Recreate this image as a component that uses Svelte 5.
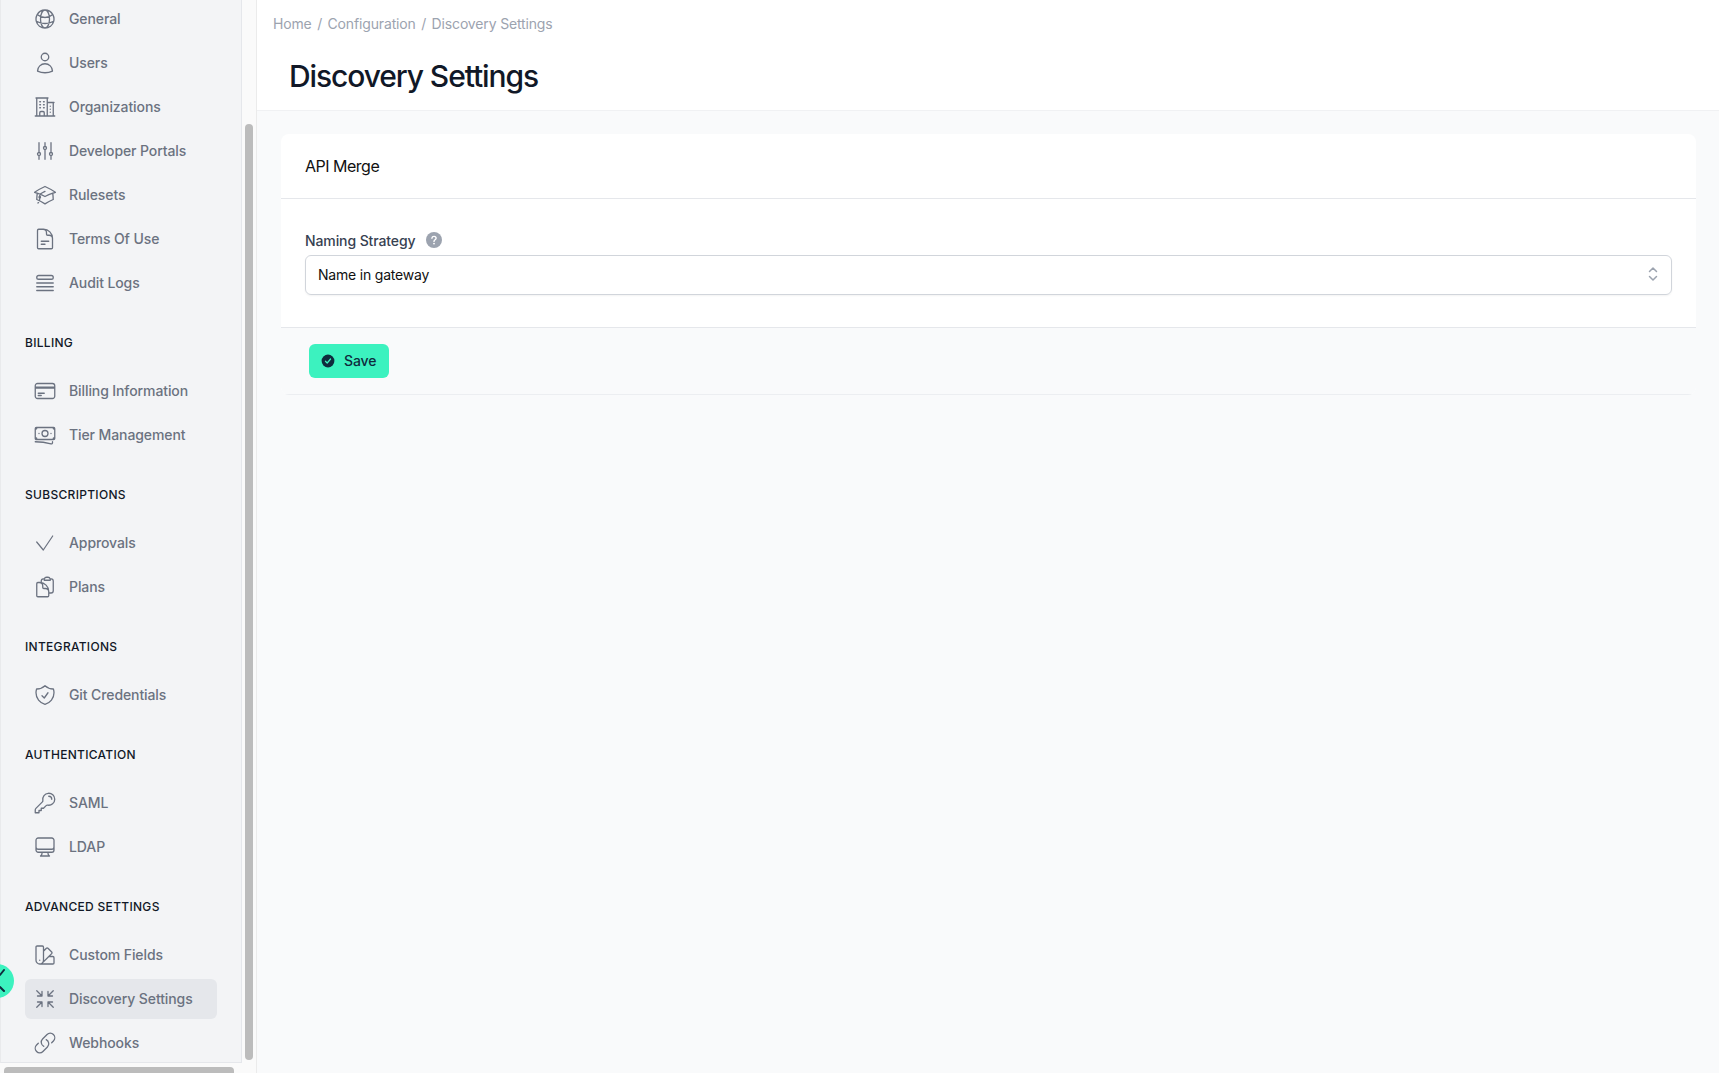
<script lang="ts">
    const icons: Record<string, string> = {
        globe: 'M12 21a9.004 9.004 0 0 0 8.716-6.747M12 21a9.004 9.004 0 0 1-8.716-6.747M12 21c2.485 0 4.5-4.03 4.5-9S14.485 3 12 3m0 18c-2.485 0-4.5-4.03-4.5-9S9.515 3 12 3m0 0a8.997 8.997 0 0 1 7.843 4.582M12 3a8.997 8.997 0 0 0-7.843 4.582m15.686 0A11.953 11.953 0 0 1 12 10.5c-2.998 0-5.74-1.1-7.843-2.918m15.686 0A8.959 8.959 0 0 1 21 12c0 .778-.099 1.533-.284 2.253m0 0A17.919 17.919 0 0 1 12 16.5c-3.162 0-6.133-.815-8.716-2.247m0 0A9.015 9.015 0 0 1 3 12c0-1.605.42-3.113 1.157-4.418',
        user: 'M15.75 6a3.75 3.75 0 1 1-7.5 0 3.75 3.75 0 0 1 7.5 0ZM4.501 20.118a7.5 7.5 0 0 1 14.998 0A17.933 17.933 0 0 1 12 21.75c-2.676 0-5.216-.584-7.499-1.632Z',
        building: 'M2.25 21h19.5m-18-18v18m10.5-18v18m6-13.5V21M6.75 6.75h.75m-.75 3h.75m-.75 3h.75m3-6h.75m-.75 3h.75m-.75 3h.75M6.75 21v-3.375c0-.621.504-1.125 1.125-1.125h2.25c.621 0 1.125.504 1.125 1.125V21M3 3h12m-.75 4.5H21m-3.75 3.75h.008v.008h-.008v-.008Zm0 3h.008v.008h-.008v-.008Zm0 3h.008v.008h-.008v-.008Z',
        sliders: 'M6 13.5V3.75m0 9.75a1.5 1.5 0 0 1 0 3m0-3a1.5 1.5 0 0 0 0 3m0 3.75V16.5m12-3V3.75m0 9.75a1.5 1.5 0 0 1 0 3m0-3a1.5 1.5 0 0 0 0 3m0 3.75V16.5m-6-9V3.75m0 3.75a1.5 1.5 0 0 1 0 3m0-3a1.5 1.5 0 0 0 0 3m0 9.75V10.5',
        cap: 'M4.26 10.147a60.438 60.438 0 0 0-.491 6.347A48.62 48.62 0 0 1 12 20.904a48.62 48.62 0 0 1 8.232-4.41 60.46 60.46 0 0 0-.491-6.347m-15.482 0a50.636 50.636 0 0 0-2.658-.813A59.906 59.906 0 0 1 12 3.493a59.903 59.903 0 0 1 10.399 5.84c-.896.248-1.783.52-2.658.814m-15.482 0A50.717 50.717 0 0 1 12 13.489a50.702 50.702 0 0 1 7.74-3.342M6.75 15a.75.75 0 1 0 0-1.5.75.75 0 0 0 0 1.5Zm0 0v-3.675A55.378 55.378 0 0 1 12 8.443m-7.007 11.55A5.981 5.981 0 0 0 6.75 15.75v-1.5',
        document: 'M19.5 14.25v-2.625a3.375 3.375 0 0 0-3.375-3.375h-1.5A1.125 1.125 0 0 1 13.5 7.125v-1.5a3.375 3.375 0 0 0-3.375-3.375H8.25m0 12h7.5m-7.5 3H12M10.5 2.25H5.625c-.621 0-1.125.504-1.125 1.125v17.25c0 .621.504 1.125 1.125 1.125h12.75c.621 0 1.125-.504 1.125-1.125V11.25a9 9 0 0 0-9-9Z',
        queue: 'M3.75 12h16.5m-16.5 3.75h16.5m-16.5 3.75h16.5M5.625 4.5h12.75a1.875 1.875 0 0 1 0 3.75H5.625a1.875 1.875 0 0 1 0-3.75Z',
        card: 'M2.25 8.25h19.5M2.25 9h19.5m-16.5 5.25h6m-6 2.25h3m-3.75 3h15a2.25 2.25 0 0 0 2.25-2.25V6.75A2.25 2.25 0 0 0 19.5 4.5h-15a2.25 2.25 0 0 0-2.25 2.25v10.5A2.25 2.25 0 0 0 4.5 19.5Z',
        banknotes: 'M2.25 18.75a60.07 60.07 0 0 1 15.797 2.101c.727.198 1.453-.342 1.453-1.096V18.75M3.750 4.5v.75A.75.75 0 0 1 3 6h-.75m0 0v-.375c0-.621.504-1.125 1.125-1.125H20.250M2.250 6v9m18-10.5v.75c0 .414.336.75.75.75h.75m-1.5-1.5h.375c.621 0 1.125.504 1.125 1.125v9.75c0 .621-.504 1.125-1.125 1.125h-.375m1.5-1.5H21a.75.75 0 0 0-.75.75v.75m0 0H3.750m0 0h-.375a1.125 1.125 0 0 1-1.125-1.125V15m1.5 1.5v-.75A.75.75 0 0 0 3 15h-.75M15 10.5a3 3 0 1 1-6 0 3 3 0 0 1 6 0Zm3 0h.008v.008H18V10.5Zm-12 0h.008v.008H6V10.5Z',
        check: 'M3.7 11 10.3 19 19.7 5',
        clipboard: 'M8.25 7.5V6.108c0-1.135.845-2.098 1.976-2.192.373-.03.748-.057 1.123-.08M15.75 18H18a2.25 2.25 0 0 0 2.25-2.25V6.108c0-1.135-.845-2.098-1.976-2.192a48.424 48.424 0 0 0-1.123-.08M15.75 18.75v-1.875a3.375 3.375 0 0 0-3.375-3.375h-1.5a1.125 1.125 0 0 1-1.125-1.125v-1.5A3.375 3.375 0 0 0 6.375 7.5H5.25m11.9-3.664A2.251 2.251 0 0 0 15 2.25h-1.5a2.251 2.251 0 0 0-2.15 1.586m5.8 0c.065.21.1.433.1.664v.75h-6V4.5c0-.231.035-.454.1-.664M6.75 7.5H4.875c-.621 0-1.125.504-1.125 1.125v12c0 .621.504 1.125 1.125 1.125h9.75c.621 0 1.125-.504 1.125-1.125V16.5a9 9 0 0 0-9-9Z',
        shield: 'M9 12.75 11.25 15 15 9.75m-3-7.036A11.959 11.959 0 0 1 3.598 6 11.99 11.99 0 0 0 3 9.749c0 5.592 3.824 10.29 9 11.623 5.176-1.332 9-6.03 9-11.622 0-1.31-.21-2.571-.598-3.751h-.152c-3.196 0-6.1-1.248-8.25-3.285Z',
        key: 'M15.75 5.25a3 3 0 0 1 3 3m3 0a6 6 0 0 1-7.029 5.912c-.563-.097-1.159.026-1.563.43L10.5 17.25H8.25v2.25H6v2.25H2.25v-2.818c0-.597.237-1.17.659-1.591l6.499-6.499c.404-.404.527-1 .43-1.563A6 6 0 1 1 21.75 8.25Z',
        desktop: 'M9 17.25v1.007a3 3 0 0 1-.879 2.122L7.5 21h9l-.621-.621A3 3 0 0 1 15 18.257V17.25m6-12V15a2.25 2.25 0 0 1-2.25 2.25H5.25A2.25 2.25 0 0 1 3 15V5.25m18 0A2.25 2.25 0 0 0 18.75 3H5.25A2.25 2.25 0 0 0 3 5.25m18 0V12a2.25 2.25 0 0 1-2.25 2.25H5.25A2.25 2.25 0 0 1 3 12V5.25',
        swatch: 'M4.098 19.902a3.75 3.75 0 0 0 5.304 0l6.401-6.402M6.75 21A3.75 3.75 0 0 1 3 17.25V4.125C3 3.504 3.504 3 4.125 3h5.25c.621 0 1.125.504 1.125 1.125v4.072M6.75 21a3.75 3.75 0 0 0 3.75-3.75V8.197M6.75 21h13.125c.621 0 1.125-.504 1.125-1.125v-5.25c0-.621-.504-1.125-1.125-1.125h-4.072M10.5 8.197l2.88-2.88c.438-.439 1.15-.439 1.59 0l3.712 3.713c.44.44.44 1.152 0 1.59l-2.879 2.88M6.75 17.25h.008v.008H6.75v-.008Z',
        arrowsIn: 'M9 9V4.5M9 9H4.5M9 9 3.75 3.75M9 15v4.5M9 15H4.5M9 15l-5.25 5.25M15 9h4.5M15 9V4.5M15 9l5.25-5.25M15 15h4.5M15 15v4.5m0-4.5 5.25 5.25',
        link: 'M13.19 8.688a4.5 4.5 0 0 1 1.242 7.244l-4.5 4.5a4.5 4.5 0 0 1-6.364-6.364l1.757-1.757m13.35-.622 1.757-1.757a4.5 4.5 0 0 0-6.364-6.364l-4.5 4.5a4.5 4.5 0 0 0 1.242 7.244',
    }

    const groups = [
        {
            items: [
                {label: 'General', icon: 'globe'},
                {label: 'Users', icon: 'user'},
                {label: 'Organizations', icon: 'building'},
                {label: 'Developer Portals', icon: 'sliders'},
                {label: 'Rulesets', icon: 'cap'},
                {label: 'Terms Of Use', icon: 'document'},
                {label: 'Audit Logs', icon: 'queue'},
            ],
        },
        {
            title: 'Billing',
            items: [
                {label: 'Billing Information', icon: 'card'},
                {label: 'Tier Management', icon: 'banknotes'},
            ],
        },
        {
            title: 'Subscriptions',
            items: [
                {label: 'Approvals', icon: 'check'},
                {label: 'Plans', icon: 'clipboard'},
            ],
        },
        {
            title: 'Integrations',
            items: [{label: 'Git Credentials', icon: 'shield'}],
        },
        {
            title: 'Authentication',
            items: [
                {label: 'SAML', icon: 'key'},
                {label: 'LDAP', icon: 'desktop'},
            ],
        },
        {
            title: 'Advanced Settings',
            items: [
                {label: 'Custom Fields', icon: 'swatch'},
                {label: 'Discovery Settings', icon: 'arrowsIn', active: true},
                {label: 'Webhooks', icon: 'link'},
            ],
        },
    ]
</script>

<div class="page">
    <aside class="sidebar">
        <div class="pane">
            <nav class="nav">
                {#each groups as group}
                    <section class="group">
                        {#if group.title}
                            <h3 class="group-title">{group.title}</h3>
                        {/if}
                        <ul class="items">
                            {#each group.items as item}
                                <li class="item" class:active={item.active}>
                                    <svg class="icon" class:thin={item.icon === 'check'} viewBox="0 0 24 24" fill="none" stroke="currentColor" stroke-linecap="round" stroke-linejoin="round">
                                        <path d={icons[item.icon]} />
                                    </svg>
                                    <span class="item-label">{item.label}</span>
                                </li>
                            {/each}
                        </ul>
                    </section>
                {/each}
            </nav>
            <div class="vthumb"></div>
        </div>
        <div class="hbar"><div class="hthumb"></div></div>
        <div class="toggle">
            <svg viewBox="0 0 34 34" fill="none" stroke="#0f2b3d" stroke-width="2" stroke-linecap="round" stroke-linejoin="round">
                <path d="M24 6l-4 5M20 23l4 4" />
            </svg>
        </div>
    </aside>

    <main class="main">
        <header class="header">
            <div class="crumbs">
                <span>Home</span><i>/</i><span>Configuration</span><i>/</i><span>Discovery Settings</span>
            </div>
            <h1 class="title">Discovery Settings</h1>
        </header>

        <div class="content">
            <div class="card">
                <div class="card-head">API Merge</div>
                <div class="card-body">
                    <div class="label-row">
                        <label for="naming">Naming Strategy</label>
                        <svg class="help" viewBox="0 0 16 16">
                            <circle cx="8" cy="8" r="8" fill="#9ca3af" />
                            <path d="M5.9 6.2A2.1 2.1 0 0 1 8 4.4c1.2 0 2.1.8 2.1 1.8 0 1.6-2.1 1.5-2.1 3.2" fill="none" stroke="#fff" stroke-width="1.4" stroke-linecap="round" />
                            <circle cx="8" cy="11.6" r=".9" fill="#fff" />
                        </svg>
                    </div>
                    <div class="select" id="naming">
                        <span>Name in gateway</span>
                        <svg class="updown" viewBox="0 0 20 20" fill="none" stroke="#9ca3af" stroke-width="1.5" stroke-linecap="round" stroke-linejoin="round">
                            <path d="M6.5 7.5 10 4l3.5 3.5M6.5 12.5 10 16l3.500-3.500" />
                        </svg>
                    </div>
                </div>
                <div class="card-foot">
                    <button class="save">
                        <svg viewBox="0 0 20 20" class="save-icon">
                            <circle cx="10" cy="10" r="8" fill="#0f2b3d" />
                            <path d="M6.8 10.3 9 12.500l4.200-5" fill="none" stroke="#3cf2bf" stroke-width="1.500" stroke-linecap="round" stroke-linejoin="round" />
                        </svg>
                        <span class="save-label">Save</span>
                    </button>
                </div>
            </div>
        </div>
    </main>
</div>

<style>
    :global(body) {
        margin: 0;
        font-family: Inter, "Liberation Sans", sans-serif;
        overflow: hidden;
    }
    .page {
        display: flex;
        width: 1719px;
        height: 1073px;
        overflow: hidden;
    }
    .sidebar {
        position: relative;
        flex: none;
        width: 257px;
        display: flex;
        flex-direction: column;
        background: #fafafa;
        border-right: 1px solid #ebebeb;
        box-sizing: border-box;
    }
    .pane {
        position: relative;
        flex: 1;
        min-height: 0;
        overflow: hidden;
    }
    .nav {
        width: 242px;
        height: 100%;
        box-sizing: border-box;
        background: #f3f4f6;
        border-right: 1px solid #e5e7eb;
        border-bottom: 1px solid #e5e7eb;
        border-left: 1px solid #e9eaec;
        padding: 0 24px;
        overflow: hidden;
    }
    .group {
        margin-bottom: 32px;
    }
    .group:first-child {
        margin-top: -1px;
    }
    .group-title {
        margin: 0 0 20px;
        font-size: 12px;
        line-height: 16px;
        font-weight: 500;
        letter-spacing: 0.3px;
        text-transform: uppercase;
        color: #111827;
    }
    .items {
        list-style: none;
        margin: 0;
        padding: 0;
        display: flex;
        flex-direction: column;
        gap: 4px;
    }
    .item {
        display: flex;
        align-items: center;
        gap: 12px;
        width: 192px;
        height: 40px;
        padding: 0 8px;
        box-sizing: border-box;
        border-radius: 6px;
        font-size: 14px;
        font-weight: 500;
        letter-spacing: -0.1px;
        color: #6b7280;
        white-space: nowrap;
    }
    .item-label {
        padding-bottom: 2px;
    }
    .item.active {
        background: #e5e7eb;
    }
    .icon {
        width: 24px;
        height: 24px;
        flex: none;
        stroke-width: 1.3;
    }
    .icon.thin {
        stroke-width: 1.2;
    }
    .vthumb {
        position: absolute;
        left: 245px;
        top: 124px;
        bottom: 3px;
        width: 8px;
        border-radius: 4px;
        background: #bcbcbc;
    }
    .hbar {
        flex: none;
        height: 10px;
        padding: 4px 22px 0 4px;
        box-sizing: border-box;
    }
    .hthumb {
        height: 100%;
        border-radius: 4px 4px 0 0;
        background: #bcbcbc;
    }
    .toggle {
        position: absolute;
        left: -20px;
        top: 964px;
        width: 34px;
        height: 34px;
        border-radius: 50%;
        background: #3cf2bf;
    }
    .toggle svg {
        display: block;
        width: 34px;
        height: 34px;
    }
    .main {
        flex: 1;
        min-width: 0;
        display: flex;
        flex-direction: column;
        background: #f9fafb;
    }
    .header {
        height: 111px;
        box-sizing: border-box;
        flex: none;
        background: #fff;
        border-bottom: 1px solid #f0f1f3;
        padding: 14px 16px 0;
    }
    .crumbs {
        display: flex;
        align-items: center;
        font-size: 14px;
        line-height: 20px;
        letter-spacing: -0.15px;
        color: #9ca3af;
    }
    .crumbs i {
        font-style: normal;
        margin: 0 5.5px;
    }
    .title {
        margin: 24px 0 0 16px;
        font-size: 30px;
        line-height: 36px;
        font-weight: 500;
        letter-spacing: -1.1px;
        color: #111827;
    }
    .content {
        padding: 23px 24px;
    }
    .card {
        border-radius: 8px;
        background: #fff;
        overflow: hidden;
        width: 1415px;
    }
    .card-head {
        height: 65px;
        box-sizing: border-box;
        padding: 0 24px;
        display: flex;
        align-items: center;
        font-size: 16px;
        letter-spacing: -0.5px;
        color: #111;
        border-bottom: 1px solid #e5e7eb;
    }
    .card-body {
        height: 129px;
        box-sizing: border-box;
        padding: 31px 24px 0;
        border-bottom: 1px solid #e5e7eb;
    }
    .label-row {
        display: flex;
        align-items: center;
        gap: 10px;
        height: 20px;
        margin-bottom: 5px;
    }
    label {
        font-size: 14px;
        font-weight: 500;
        letter-spacing: -0.1px;
        color: #374151;
    }
    .help {
        width: 16px;
        height: 16px;
    }
    .select {
        display: flex;
        align-items: center;
        justify-content: space-between;
        height: 40px;
        box-sizing: border-box;
        padding: 0 8px 2px 12px;
        border: 1px solid #d1d5db;
        border-radius: 6px;
        box-shadow: 0 1px 2px rgba(0, 0, 0, 0.05);
        font-size: 14px;
        letter-spacing: -0.2px;
        color: #111;
    }
    .updown {
        width: 20px;
        height: 20px;
    }
    .card-foot {
        height: 67px;
        box-sizing: border-box;
        padding: 16px 28px;
        background: #f9fafb;
        border-bottom: 1px solid #eceef1;
    }
    .save {
        display: flex;
        align-items: center;
        gap: 8px;
        height: 34px;
        width: 80px;
        box-sizing: border-box;
        padding: 0 11px;
        border: 0;
        border-radius: 6px;
        background: #3cf2bf;
        font-family: inherit;
        font-size: 14px;
        font-weight: 500;
        letter-spacing: -0.1px;
        color: #0f2b3d;
    }
    .save-label {
        padding-bottom: 2px;
    }
    .save-icon {
        width: 16px;
        height: 16px;
        flex: none;
    }
</style>
